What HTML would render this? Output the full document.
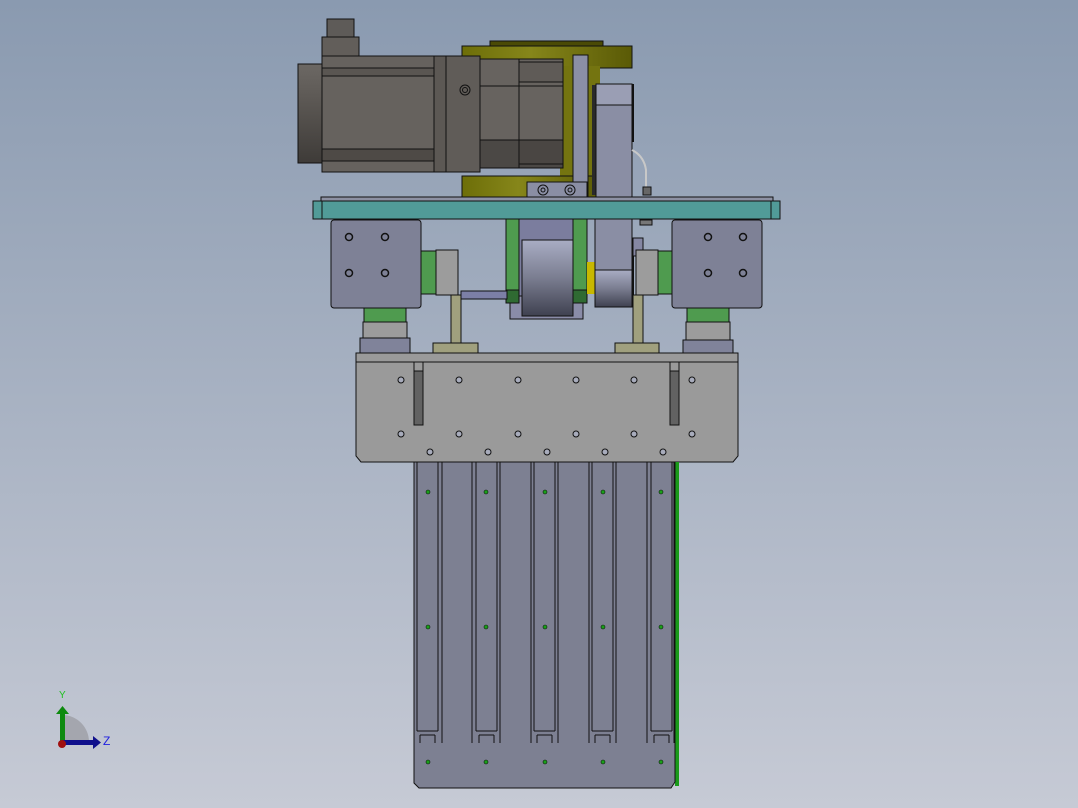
<!DOCTYPE html>
<html><head><meta charset="utf-8"><style>
html,body{margin:0;padding:0;width:1078px;height:808px;overflow:hidden}
svg{display:block}
</style></head><body>
<svg width="1078" height="808" viewBox="0 0 1078 808" xmlns="http://www.w3.org/2000/svg" stroke="#111" stroke-width="1">
<defs>
<linearGradient id="bg" x1="0" y1="0" x2="0" y2="1"><stop offset="0" stop-color="#8a9ab0"/><stop offset="1" stop-color="#c6cad5"/></linearGradient>
<linearGradient id="yel" x1="0" y1="0" x2="1" y2="0"><stop offset="0" stop-color="#6d6e08"/><stop offset=".4" stop-color="#86861a"/><stop offset="1" stop-color="#5a5a06"/></linearGradient>
<linearGradient id="cap" x1="0" y1="0" x2="0" y2="1"><stop offset="0" stop-color="#6c6864"/><stop offset=".3" stop-color="#5f5b57"/><stop offset="1" stop-color="#3e3b38"/></linearGradient>
<linearGradient id="wh" x1="0" y1="0" x2="0" y2="1"><stop offset="0" stop-color="#a9adc4"/><stop offset=".5" stop-color="#7a7d90"/><stop offset="1" stop-color="#3f4150"/></linearGradient>
</defs>
<rect width="1078" height="808" fill="url(#bg)" stroke="none"/>

<!-- yellow disk -->
<rect x="490" y="41" width="113" height="6" fill="#4a4a05"/>
<rect x="462" y="46" width="170" height="22" fill="url(#yel)"/>
<rect x="560" y="66" width="40" height="112" fill="#747410" stroke="none"/>
<rect x="462" y="176" width="140" height="24" fill="url(#yel)"/>

<!-- motor -->
<rect x="327" y="19" width="27" height="19" fill="#5e5b58"/>
<rect x="322" y="37" width="37" height="19" fill="#625e5a"/>
<rect x="298" y="64" width="24" height="99" fill="url(#cap)"/>
<rect x="322" y="56" width="112" height="116" fill="#66625e"/>
<rect x="322" y="68" width="112" height="8" fill="#5a5652"/>
<rect x="322" y="149" width="112" height="12" fill="#4e4a46"/>
<rect x="434" y="56" width="12" height="116" fill="#5c5854"/>
<rect x="446" y="56" width="34" height="116" fill="#605c58"/>
<circle cx="465" cy="90" r="5" fill="none"/><circle cx="465" cy="90" r="2.5" fill="none"/>
<rect x="480" y="59" width="83" height="109" fill="#67635f"/>
<rect x="480" y="140" width="83" height="28" fill="#4b4845"/>
<rect x="519" y="62" width="44" height="20" fill="#5f5b57"/>
<rect x="519" y="140" width="44" height="24" fill="#4a4643"/>
<line x1="519" y1="59" x2="519" y2="168"/>
<line x1="480" y1="86" x2="563" y2="86"/>

<!-- plate vertical + pulley -->
<rect x="573" y="55" width="15" height="145" fill="#8b8fa6"/>
<rect x="592" y="85" width="4" height="110" fill="#2a2a2a" stroke="none"/>
<rect x="596" y="84" width="36" height="116" fill="#8a8ea4"/>
<rect x="596" y="84" width="36" height="21" fill="#9a9eb4"/>
<line x1="633" y1="84" x2="633" y2="142" stroke-width="2"/>
<path d="M632 150 q12 6 14 20 v20" fill="none" stroke="#c8c8c8" stroke-width="2"/>
<rect x="643" y="187" width="8" height="8" fill="#666"/>
<rect x="527" y="182" width="60" height="18" fill="#8a8ea4"/>
<circle cx="543" cy="190" r="5" fill="none"/><circle cx="543" cy="190" r="2" fill="none"/>
<circle cx="570" cy="190" r="5" fill="none"/><circle cx="570" cy="190" r="2" fill="none"/>

<!-- teal plate -->
<rect x="321" y="197" width="452" height="4" fill="#8d91a3"/>
<rect x="313" y="201" width="467" height="18" fill="#519b98"/>
<line x1="322" y1="201" x2="322" y2="219"/><line x1="771" y1="201" x2="771" y2="219"/>

<!-- under plate center -->
<rect x="519" y="219" width="54" height="80" fill="#7b7d9e"/>
<rect x="510" y="296" width="73" height="23" fill="#8a8ca8"/>
<rect x="522" y="240" width="51" height="76" fill="url(#wh)"/>
<rect x="506" y="219" width="13" height="84" fill="#4f9b4f"/>
<rect x="573" y="219" width="14" height="84" fill="#4f9b4f"/>
<rect x="506" y="290" width="13" height="13" fill="#2f6a32"/>
<rect x="573" y="290" width="14" height="13" fill="#2f6a32"/>
<rect x="587" y="262" width="8" height="32" fill="#c8b800" stroke="none"/>
<rect x="595" y="219" width="37" height="88" fill="#8a8ea4"/>
<rect x="595" y="270" width="37" height="37" fill="url(#wh)"/>
<line x1="633" y1="250" x2="633" y2="306" stroke-width="2"/>
<rect x="633" y="238" width="10" height="18" fill="#8587a3"/>
<rect x="640" y="220" width="12" height="5" fill="#777"/>
<rect x="461" y="291" width="46" height="8" fill="#7c7fa6"/>

<!-- T posts -->
<rect x="451" y="295" width="10" height="48" fill="#a0a07e"/>
<rect x="433" y="343" width="45" height="15" fill="#a0a07e"/>
<rect x="633" y="295" width="10" height="48" fill="#a0a07e"/>
<rect x="615" y="343" width="44" height="14" fill="#a0a07e"/>

<!-- side blocks -->
<rect x="421" y="251" width="15" height="43" fill="#4f9b4f"/>
<rect x="436" y="250" width="22" height="45" fill="#9c9c9c"/>
<rect x="658" y="251" width="14" height="43" fill="#4f9b4f"/>
<rect x="636" y="250" width="22" height="45" fill="#9c9c9c"/>
<rect x="331" y="220" width="90" height="88" rx="3" fill="#7e8196"/>
<rect x="672" y="220" width="90" height="88" rx="3" fill="#7e8196"/>
<g fill="none" stroke-width="1.5">
<circle cx="349" cy="237" r="3.5"/><circle cx="385" cy="237" r="3.5"/><circle cx="349" cy="273" r="3.5"/><circle cx="385" cy="273" r="3.5"/>
<circle cx="708" cy="237" r="3.5"/><circle cx="743" cy="237" r="3.5"/><circle cx="708" cy="273" r="3.5"/><circle cx="743" cy="273" r="3.5"/>
</g>
<rect x="364" y="308" width="42" height="14" fill="#4f9b4f"/>
<rect x="363" y="322" width="44" height="21" fill="#9c9c9c"/>
<rect x="360" y="338" width="50" height="16" fill="#80839a"/>
<rect x="687" y="308" width="42" height="14" fill="#4f9b4f"/>
<rect x="686" y="322" width="44" height="21" fill="#9c9c9c"/>
<rect x="683" y="340" width="50" height="14" fill="#80839a"/>

<!-- big plate -->
<path d="M356 353 H738 V456 L733 462 H361 L356 456 Z" fill="#9a9a9a"/>
<line x1="356" y1="362" x2="738" y2="362"/>
<rect x="414" y="371" width="9" height="54" fill="#626262"/>
<rect x="670" y="371" width="9" height="54" fill="#626262"/>
<path d="M414 362 V371 M423 362 V371 M670 362 V371 M679 362 V371" fill="none"/>
<g fill="#a8acbc" stroke-width="1">
<circle cx="401" cy="380" r="3"/><circle cx="459" cy="380" r="3"/><circle cx="518" cy="380" r="3"/><circle cx="576" cy="380" r="3"/><circle cx="634" cy="380" r="3"/><circle cx="692" cy="380" r="3"/>
<circle cx="401" cy="434" r="3"/><circle cx="459" cy="434" r="3"/><circle cx="518" cy="434" r="3"/><circle cx="576" cy="434" r="3"/><circle cx="634" cy="434" r="3"/><circle cx="692" cy="434" r="3"/>
<circle cx="430" cy="452" r="3"/><circle cx="488" cy="452" r="3"/><circle cx="547" cy="452" r="3"/><circle cx="605" cy="452" r="3"/><circle cx="663" cy="452" r="3"/>
</g>

<!-- tray -->
<rect x="675" y="462" width="4" height="324" fill="#1a9a1a" stroke="none"/>
<path d="M414 462 H675 V782 L671 788 H419 L414 783 Z" fill="#7d8092"/>
<g fill="none">
<path d="M414 462 V743 M417 462 V731 M438 462 V731 M442 462 V743 M417 731 H438 M420 735 V743 M435 735 V743 M420 735 H435"/>
<path d="M472 462 V743 M476 462 V731 M497 462 V731 M500 462 V743 M476 731 H497 M479 735 V743 M494 735 V743 M479 735 H494"/>
<path d="M531 462 V743 M534 462 V731 M555 462 V731 M558 462 V743 M534 731 H555 M537 735 V743 M552 735 V743 M537 735 H552"/>
<path d="M589 462 V743 M592 462 V731 M613 462 V731 M616 462 V743 M592 731 H613 M595 735 V743 M610 735 V743 M595 735 H610"/>
<path d="M647 462 V743 M651 462 V731 M672 462 V731 M674 462 V743 M651 731 H672 M654 735 V743 M669 735 V743 M654 735 H669"/>
</g>
<g fill="#1aa01a" stroke-width="0.6">
<circle cx="428" cy="492" r="2"/><circle cx="486" cy="492" r="2"/><circle cx="545" cy="492" r="2"/><circle cx="603" cy="492" r="2"/><circle cx="661" cy="492" r="2"/>
<circle cx="428" cy="627" r="2"/><circle cx="486" cy="627" r="2"/><circle cx="545" cy="627" r="2"/><circle cx="603" cy="627" r="2"/><circle cx="661" cy="627" r="2"/>
<circle cx="428" cy="762" r="2"/><circle cx="486" cy="762" r="2"/><circle cx="545" cy="762" r="2"/><circle cx="603" cy="762" r="2"/><circle cx="661" cy="762" r="2"/>
</g>

<!-- triad -->
<path d="M62 742 V715 A27 27 0 0 1 89 742 Z" fill="#a4a6ae" stroke="none"/>
<rect x="60" y="712" width="5" height="32" fill="#0e8a0e" stroke="none"/>
<path d="M56 714 L62.5 706 L69 714 Z" fill="#0e8a0e" stroke="none"/>
<rect x="62" y="740" width="32" height="5" fill="#10108c" stroke="none"/>
<path d="M93 736 L101 742.5 L93 749 Z" fill="#10108c" stroke="none"/>
<circle cx="62" cy="744" r="4" fill="#a01010" stroke="none"/>
<text x="59" y="698" font-family="Liberation Sans, sans-serif" font-size="10" fill="#20c020" stroke="none">Y</text>
<text x="103" y="745" font-family="Liberation Sans, sans-serif" font-size="12" fill="#2020e0" stroke="none">Z</text>
</svg>
</body></html>
